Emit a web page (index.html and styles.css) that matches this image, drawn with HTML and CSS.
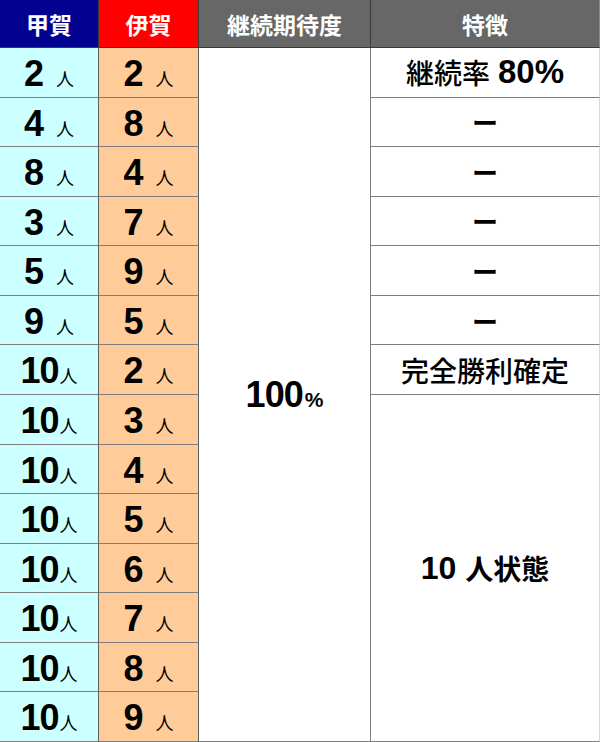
FILE: index.html
```html
<!DOCTYPE html>
<html lang="ja">
<head>
<meta charset="utf-8">
<link rel="stylesheet" href="styles.css">
</head>
<body>
<div class="tbl">
  <div class="h h-koga">甲賀</div>
  <div class="h h-iga">伊賀</div>
  <div class="h h-gray">継続期待度</div>
  <div class="h h-gray h-last">特徴</div>

  <div class="c k r1"><span class="n s">2</span><span class="u">人</span></div>
  <div class="c i r1"><span class="n s">2</span><span class="u">人</span></div>
  <div class="c k r2"><span class="n s">4</span><span class="u">人</span></div>
  <div class="c i r2"><span class="n s">8</span><span class="u">人</span></div>
  <div class="c k r3"><span class="n s">8</span><span class="u">人</span></div>
  <div class="c i r3"><span class="n s">4</span><span class="u">人</span></div>
  <div class="c k r4"><span class="n s">3</span><span class="u">人</span></div>
  <div class="c i r4"><span class="n s">7</span><span class="u">人</span></div>
  <div class="c k r5"><span class="n s">5</span><span class="u">人</span></div>
  <div class="c i r5"><span class="n s">9</span><span class="u">人</span></div>
  <div class="c k r6"><span class="n s">9</span><span class="u">人</span></div>
  <div class="c i r6"><span class="n s">5</span><span class="u">人</span></div>
  <div class="c k r7"><span class="n">10</span><span class="u">人</span></div>
  <div class="c i r7"><span class="n s">2</span><span class="u">人</span></div>
  <div class="c k r8"><span class="n">10</span><span class="u">人</span></div>
  <div class="c i r8"><span class="n s">3</span><span class="u">人</span></div>
  <div class="c k r9"><span class="n">10</span><span class="u">人</span></div>
  <div class="c i r9"><span class="n s">4</span><span class="u">人</span></div>
  <div class="c k r10"><span class="n">10</span><span class="u">人</span></div>
  <div class="c i r10"><span class="n s">5</span><span class="u">人</span></div>
  <div class="c k r11"><span class="n">10</span><span class="u">人</span></div>
  <div class="c i r11"><span class="n s">6</span><span class="u">人</span></div>
  <div class="c k r12"><span class="n">10</span><span class="u">人</span></div>
  <div class="c i r12"><span class="n s">7</span><span class="u">人</span></div>
  <div class="c k r13"><span class="n">10</span><span class="u">人</span></div>
  <div class="c i r13"><span class="n s">8</span><span class="u">人</span></div>
  <div class="c k r14"><span class="n">10</span><span class="u">人</span></div>
  <div class="c i r14"><span class="n s">9</span><span class="u">人</span></div>

  <div class="c rate"><span class="big">100</span><span class="pct">%</span></div>

  <div class="c f r1"><span class="jp">継続率</span><span class="num80">80%</span></div>
  <div class="c f r2"><span class="dash">ー</span></div>
  <div class="c f r3"><span class="dash">ー</span></div>
  <div class="c f r4"><span class="dash">ー</span></div>
  <div class="c f r5"><span class="dash">ー</span></div>
  <div class="c f r6"><span class="dash">ー</span></div>
  <div class="c f r7"><span class="jp">完全勝利確定</span></div>
  <div class="c f ften"><span class="ten">10</span><span class="tenjp">人状態</span></div>
</div>
</body>
</html>
```

FILE: styles.css
```css
html, body {
  margin: 0;
  padding: 0;
  background: #ffffff;
}

.tbl {
  width: 600px;
  height: 742px;
  display: grid;
  grid-template-columns: 99px 100px 172px 229px;
  grid-template-rows: 48px repeat(14, 1fr);
  font-family: "Liberation Sans", "Noto Sans CJK JP", sans-serif;
  color: #000;
}

.h {
  display: flex;
  align-items: center;
  justify-content: center;
  color: #ffffff;
  font-family: "Noto Sans CJK JP", sans-serif;
  font-weight: 700;
  font-size: 23px;
  box-sizing: border-box;
  border-right: 1px solid #3a3a3a;
  border-bottom: 1px solid #3a3a3a;
  grid-row: 1;
}
.h-koga { background: #020290; }
.h-iga { background: #fe0000; }
.h-gray { background: #676767; }
.h-last { border-right: 1px solid #8a8a8a; }

.c {
  box-sizing: border-box;
  display: flex;
  align-items: center;
  justify-content: center;
  border-right: 1px solid #7d7d7d;
  border-bottom: 1px solid #7d7d7d;
}

.k { grid-column: 1; background: #ccffff; border-right-color: #5e5e5e; }
.i { grid-column: 2; background: #ffcc99; border-right-color: #5e5e5e; }
.f { grid-column: 4; border-right-color: #d8d8d8; }

.r1 { grid-row: 2; }
.r2 { grid-row: 3; }
.r3 { grid-row: 4; }
.r4 { grid-row: 5; }
.r5 { grid-row: 6; }
.r6 { grid-row: 7; }
.r7 { grid-row: 8; }
.r8 { grid-row: 9; }
.r9 { grid-row: 10; }
.r10 { grid-row: 11; }
.r11 { grid-row: 12; }
.r12 { grid-row: 13; }
.r13 { grid-row: 14; }
.r14 { grid-row: 15; }

.k, .i {
  align-items: baseline;
  padding-top: 8px;
}

.n {
  font-weight: 700;
  font-size: 36px;
  letter-spacing: -1px;
  line-height: 1;
}
.n.s { margin-right: 12px; }

.u {
  font-family: "Noto Sans CJK JP", sans-serif;
  font-size: 18px;
  font-weight: 400;
  line-height: 1;
  margin-left: 1px;
}

.rate {
  grid-column: 3;
  grid-row: 2 / span 14;
  align-items: baseline;
  padding-top: 360px;
  align-content: flex-start;
}
.rate {
  display: flex;
  align-items: center;
  padding-top: 0;
}
.big {
  font-weight: 700;
  font-size: 36px;
  letter-spacing: -1px;
}
.pct {
  font-weight: 700;
  font-size: 21px;
  margin-top: 10px;
  margin-left: 2px;
}

.jp {
  font-family: "Noto Sans CJK JP", sans-serif;
  font-weight: 500;
  font-size: 28px;
}
.num80 {
  font-weight: 700;
  font-size: 33px;
  margin-left: 8px;
}
.dash {
  font-family: "Noto Sans CJK JP", sans-serif;
  font-weight: 700;
  font-size: 26px;
}

.ften {
  grid-row: 9 / span 7;
}
.ten {
  font-weight: 700;
  font-size: 32px;
  margin-right: 9px;
}
.tenjp {
  font-family: "Noto Sans CJK JP", sans-serif;
  font-weight: 700;
  font-size: 28px;
}
```
